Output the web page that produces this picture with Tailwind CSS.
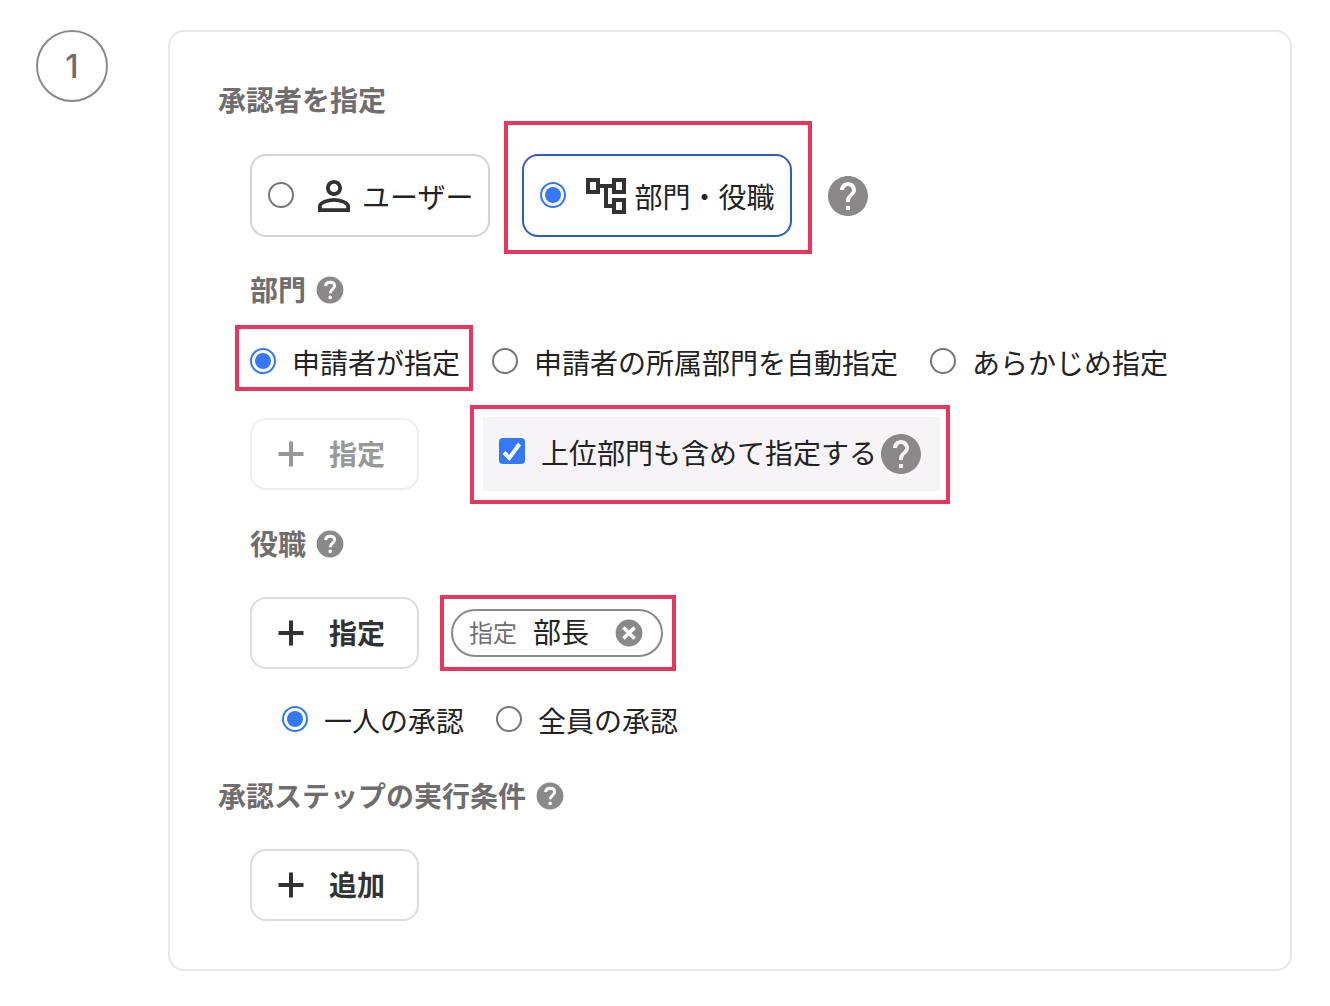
<!DOCTYPE html>
<html lang="ja">
<head>
	<meta charset="UTF-8" />
	<meta name="viewport" content="width=device-width, initial-scale=1.0" />
	<title>承認ステップ</title>
	<script src="https://cdn.jsdelivr.net/npm/@tailwindcss/browser@4"></script>
</head>
<body class="bg-white font-['Noto_Sans_CJK_JP',sans-serif] text-[28px] leading-10 text-[#222222]">
	<!-- icons -->
	<svg class="hidden" aria-hidden="true">
		<symbol id="help" viewBox="0 0 24 24">
			<path d="M12 2C6.48 2 2 6.48 2 12s4.48 10 10 10 10-4.48 10-10S17.52 2 12 2zm1 17h-2v-2h2v2zm2.07-7.75l-.9.92C13.45 12.9 13 13.5 13 15h-2v-.5c0-1.1.45-2.1 1.17-2.83l1.24-1.26c.37-.36.59-.86.59-1.41 0-1.1-.9-2-2-2s-2 .9-2 2H8c0-2.21 1.79-4 4-4s4 1.79 4 4c0 .88-.36 1.68-.93 2.25z" />
		</symbol>
		<symbol id="help-bold" viewBox="0 0 32 32">
			<circle cx="16" cy="16" r="13.4" />
			<path d="M11.6 12.2c.2-2.500 2-4 4.500-4 2.700 0 4.500 1.500 4.500 3.800 0 3.200-4.400 3.200-4.400 7.200" fill="none" stroke="#fff" stroke-width="3" />
			<circle cx="16.200" cy="23.400" r="1.800" fill="#fff" />
		</symbol>
		<symbol id="plus" viewBox="0 0 32 32">
			<path d="M16 3.500v25M3.500 16h25" fill="none" stroke="currentColor" stroke-width="4" />
		</symbol>
	</svg>

	<main class="flex items-start gap-[60px] pt-[30px] pr-[38px] pb-[35px] pl-9">
		<div class="flex size-[72px] shrink-0 items-center justify-center rounded-full border-2 border-[#8b8889] pt-0.5 font-['Inter',sans-serif] text-[32px] font-medium text-[#6f6d6e]">1</div>

		<form class="min-w-0 flex-1 rounded-2xl border-2 border-[#e8e6e7] p-12">
			<h2 class="pb-0.5 leading-[38px] font-bold text-[#6f6d6e]">承認者を指定</h2>

			<div class="mt-[34px] ml-8 flex items-center gap-8">
				<label class="flex h-[83px] items-center rounded-2xl border-2 border-[#d6d2d4] pr-[15px] pl-4">
					<input type="radio" name="approver" class="mr-4 mb-0.5 size-[26px] appearance-none rounded-full border-2 border-[#767676] bg-white" />
					<svg class="mr-1 size-12 fill-[#323232]" viewBox="0 0 24 24" aria-hidden="true"><path d="M12 5.900c1.160 0 2.100.94 2.100 2.100s-.94 2.100-2.100 2.100S9.900 9.160 9.900 8s.94-2.100 2.100-2.100m0 9c2.970 0 6.100 1.460 6.100 2.100v1.100H5.900V17c0-.64 3.130-2.100 6.100-2.100M12 4C9.790 4 8 5.790 8 8s1.790 4 4 4 4-1.790 4-4-1.790-4-4-4zm0 9c-2.670 0-8 1.340-8 4v3h16v-3c0-2.660-5.330-4-8-4z" /></svg>
					<span>ユーザー</span>
				</label>
				<label class="relative flex h-[83px] items-center rounded-2xl border-2 border-[#2f5bc4] px-4">
					<input type="radio" name="approver" checked class="mr-4 mb-0.5 size-[26px] appearance-none rounded-full border-2 border-[#3478f6] bg-[#3478f6] bg-clip-content p-[3px]" />
					<svg class="mr-1 size-12 fill-[#323232]" viewBox="0 0 24 24" aria-hidden="true"><path d="M22 11V3h-7v3H9V3H2v8h7V8h2v10h4v3h7v-8h-7v3h-2V8h2v3h7zM7 9H4V5h3v4zm10 6h3v4h-3v-4zm0-10h3v4h-3V5z" /></svg>
					<span>部門・役職</span>
					<span class="pointer-events-none absolute -top-[35px] -right-[22px] -bottom-[19px] -left-5 border-4 border-[#e8365f]"></span>
				</label>
				<button type="button" aria-label="ヘルプ"><svg class="size-12 fill-[#8b8889]"><use href="#help" /></svg></button>
			</div>

			<div class="ml-8">
				<div class="mt-[33px] flex items-center gap-2">
					<h3 class="pb-0.5 leading-[38px] font-bold text-[#6f6d6e]">部門</h3>
					<button type="button" aria-label="ヘルプ"><svg class="size-8 fill-[#8b8889]"><use href="#help-bold" /></svg></button>
				</div>

				<div class="mt-8 flex items-center gap-8">
					<label class="relative flex items-center gap-4">
						<input type="radio" name="dept" checked class="mb-0.5 size-[26px] appearance-none rounded-full border-2 border-[#3478f6] bg-[#3478f6] bg-clip-content p-[3px]" />
						<span>申請者が指定</span>
						<span class="pointer-events-none absolute -top-[17px] -right-[13px] -bottom-[9px] -left-[15px] border-4 border-[#e8365f]"></span>
					</label>
					<label class="flex items-center gap-4">
						<input type="radio" name="dept" class="mb-0.5 size-[26px] appearance-none rounded-full border-2 border-[#767676] bg-white" />
						<span>申請者の所属部門を自動指定</span>
					</label>
					<label class="flex items-center gap-4">
						<input type="radio" name="dept" class="mb-0.5 size-[26px] appearance-none rounded-full border-2 border-[#767676] bg-white" />
						<span>あらかじめ指定</span>
					</label>
				</div>

				<div class="mt-[35px] flex items-center gap-16">
					<button type="button" disabled class="flex h-[72px] items-center gap-[22px] rounded-2xl border-2 border-[#eeeeee] pr-8 pb-0.5 pl-[23px] font-bold text-[#989898]">
						<svg class="mt-0.5 size-8"><use href="#plus" /></svg>指定
					</button>
					<div class="relative flex h-[74px] items-center bg-[#f6f4f6] pr-[15px] pl-4">
						<label class="flex items-center gap-4 pb-1">
							<span class="mb-0.5 grid">
								<input type="checkbox" checked class="col-start-1 row-start-1 size-[26px] appearance-none rounded-sm bg-[#3478f6]" />
								<svg class="pointer-events-none col-start-1 row-start-1 size-[26px]" viewBox="0 0 26 26" aria-hidden="true"><path d="M5 14.500l5.300 5.500L20.500 6" fill="none" stroke="#fff" stroke-width="4" /></svg>
							</span>
							<span>上位部門も含めて指定する</span>
						</label>
						<button type="button" aria-label="ヘルプ"><svg class="size-12 fill-[#8b8889]"><use href="#help" /></svg></button>
						<span class="pointer-events-none absolute -top-3 -right-[10px] -bottom-[13px] -left-[13px] border-4 border-[#e8365f]"></span>
					</div>
				</div>

				<div class="mt-[33px] flex items-center gap-2">
					<h3 class="pb-0.5 leading-[38px] font-bold text-[#6f6d6e]">役職</h3>
					<button type="button" aria-label="ヘルプ"><svg class="size-8 fill-[#8b8889]"><use href="#help-bold" /></svg></button>
				</div>

				<div class="mt-[33px] flex items-center gap-8">
					<button type="button" class="flex h-[72px] items-center gap-[22px] rounded-2xl border-2 border-[#dcdcdc] pr-8 pb-0.5 pl-[23px] font-bold text-[#323232]">
						<svg class="mt-0.5 size-8"><use href="#plus" /></svg>指定
					</button>
					<div class="relative flex h-12 items-center rounded-full border-2 border-[#8b8889] px-4">
						<span class="mr-4 pb-0.5 text-2xl text-[#6f6d6e]">指定</span>
						<span class="mr-6 pb-1 leading-10">部長</span>
						<button type="button" aria-label="削除">
							<svg class="size-8 fill-[#8b8889]" viewBox="0 0 32 32"><circle cx="16" cy="16" r="13.400" /><path d="M10.400 10.400l11.200 11.200M21.600 10.400L10.400 21.600" stroke="#fff" stroke-width="3.600" /></svg>
						</button>
						<span class="pointer-events-none absolute -inset-y-4 -right-[15px] -left-[13px] border-4 border-[#e8365f]"></span>
					</div>
				</div>

				<div class="mt-[31px] ml-8 flex items-center gap-8">
					<label class="flex items-center gap-4">
						<input type="radio" name="count" checked class="mb-0.5 size-[26px] appearance-none rounded-full border-2 border-[#3478f6] bg-[#3478f6] bg-clip-content p-[3px]" />
						<span>一人の承認</span>
					</label>
					<label class="flex items-center gap-4">
						<input type="radio" name="count" class="mb-0.5 size-[26px] appearance-none rounded-full border-2 border-[#767676] bg-white" />
						<span>全員の承認</span>
					</label>
				</div>
			</div>

			<div class="mt-9 flex items-center gap-2">
				<h2 class="pb-0.5 leading-[38px] font-bold text-[#6f6d6e]">承認ステップの実行条件</h2>
				<button type="button" aria-label="ヘルプ"><svg class="size-8 fill-[#8b8889]"><use href="#help-bold" /></svg></button>
			</div>
			<button type="button" class="mt-[33px] ml-8 flex h-[72px] items-center gap-[22px] rounded-2xl border-2 border-[#dcdcdc] pr-8 pb-0.5 pl-[23px] font-bold text-[#323232]">
				<svg class="mt-0.5 size-8"><use href="#plus" /></svg>追加
			</button>
		</form>
	</main>
</body>
</html>
